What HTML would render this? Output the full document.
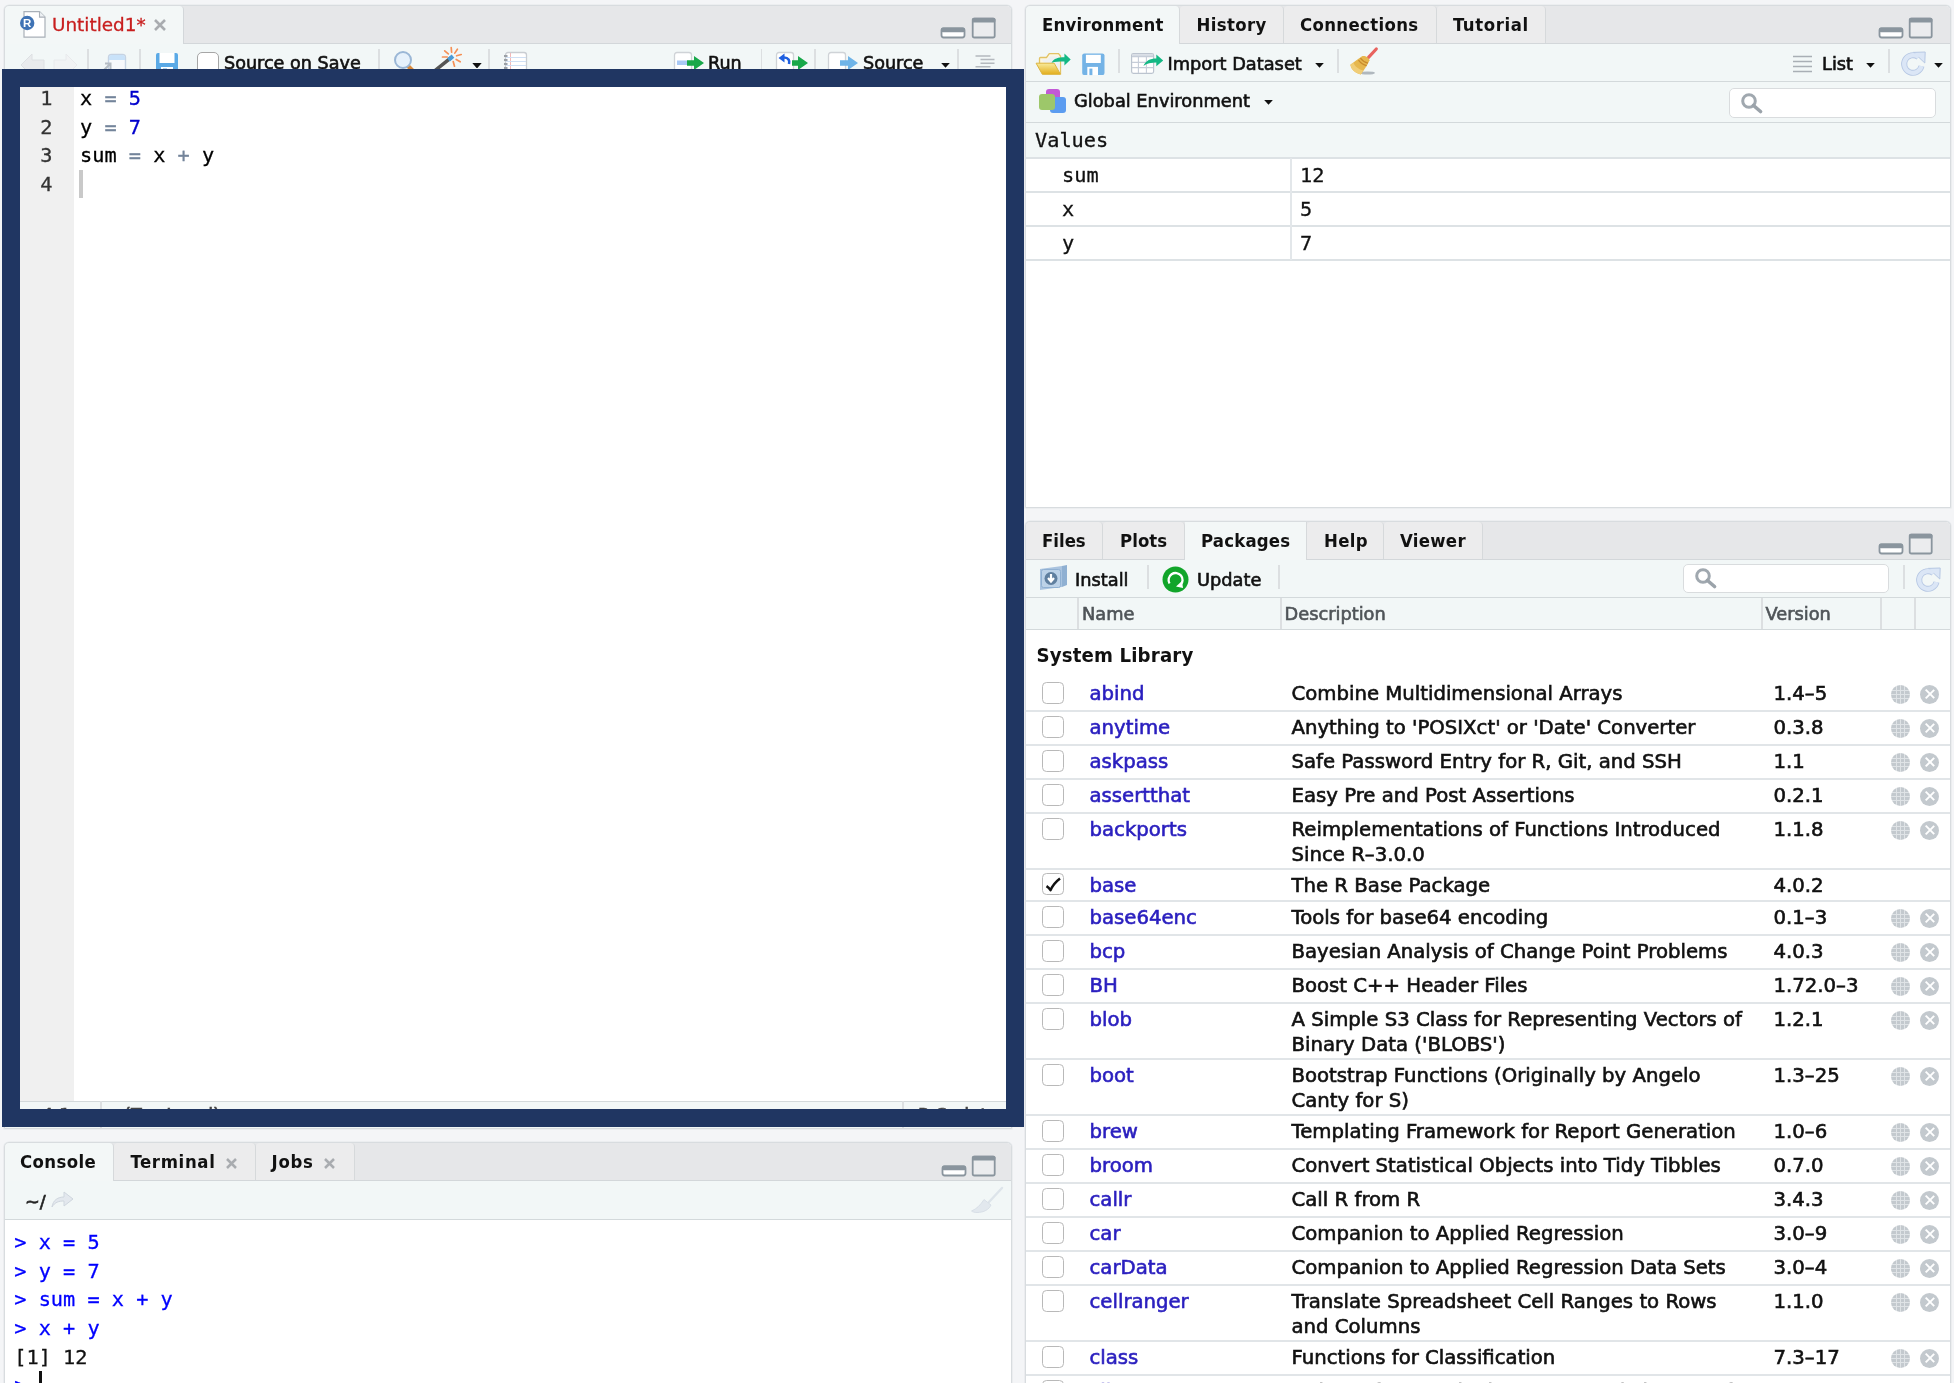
<!DOCTYPE html>
<html><head><meta charset="utf-8"><title>RStudio</title>
<style>
*{box-sizing:border-box;margin:0;padding:0}
html,body{width:1954px;height:1388px;overflow:hidden;background:#fff}
body{-webkit-text-stroke:0.62px;position:relative;font-family:"DejaVu Sans","Liberation Sans",sans-serif;font-size:18px;color:#1a1a1a}
#app{position:absolute;left:0;top:0;width:1954px;height:1383px;background:#f4f5f7;overflow:hidden;will-change:transform}
.abs{position:absolute}
.pane{position:absolute;background:#fff;border:1px solid #d8dcdf;box-shadow:0 0 0 0.6px #e4e7ea;border-radius:5px 5px 0 0;overflow:hidden}
.tabbar{position:absolute;left:0;top:0;right:0;height:38px;background:#e6e7e9;border-bottom:1px solid #d3d7da}
.tab{position:absolute;top:0;height:37px;font-weight:bold;font-size:18.4px;line-height:38px;color:#111;border-right:1px solid #d6d9db;background:#ececed;white-space:nowrap;border-radius:4px 4px 0 0}
.tab.sel{background:#f3f7f7;height:39px;border-radius:4px 4px 0 0}
.tb{position:absolute;left:0;right:0;background:#f2f7f7;border-bottom:1px solid #d3d9db}
.t{position:absolute;white-space:pre;line-height:1}
.mono{font-family:"DejaVu Sans Mono","Liberation Mono",monospace;-webkit-text-stroke:0.3px}
.ln{height:28.6px}.g{display:inline-block;width:32.5px;margin-right:27.5px;text-align:right;color:#333}.o{color:#74849a}.n{color:#0000cd}
.bt{-webkit-text-stroke:0;font-family:"DejaVu Sans Condensed","DejaVu Sans","Liberation Sans",sans-serif;font-weight:bold;font-size:18.4px;letter-spacing:0.350px;color:#111}
.erow{left:0;right:0;height:34px;border-bottom:2px solid #dde2e5;font-size:20.25px;line-height:32px;color:#111;white-space:pre}.erow .k{position:absolute;left:36px;top:0}.erow .v{position:absolute;left:274px;top:0}
.hd{font-size:17.8px;color:#4f5458}
.prow{position:absolute;left:0;right:0;border-bottom:2px solid #e1e5e8;font-size:19.7px;line-height:25.5px;color:#111}
.prow span{position:absolute;white-space:pre}
.cb{left:16px;top:4px;width:22px;height:21.5px;border:1.7px solid #b9b9b9;border-radius:4.5px;background:#fff}
.pn{left:63.5px;top:2.5px;color:#2a1fbf}.pd{left:265.5px;top:2.5px}.pv{left:747.5px;top:2.5px}
.gl{left:865px;top:6.7px;width:19px;height:19px;border-radius:50%;background:#c3c9ce;background-image:linear-gradient(#dfe3e6,#dfe3e6),linear-gradient(#dfe3e6,#dfe3e6),linear-gradient(#dfe3e6,#dfe3e6),linear-gradient(#dfe3e6,#dfe3e6),linear-gradient(#dfe3e6,#dfe3e6),linear-gradient(#dfe3e6,#dfe3e6);background-repeat:no-repeat;background-size:1px 100%,1px 100%,1px 100%,100% 1px,100% 1px,100% 1px;background-position:5px 0,9px 0,13px 0,0 5px,0 9px,0 13px}
.xx{left:894px;top:6.7px;width:19px;height:19px;border-radius:50%;background:#c3c9ce}
.xx:before,.xx:after{content:"";position:absolute;left:8.7px;top:3.5px;width:1.6px;height:12px;background:#fff;transform:rotate(45deg)}
.xx:after{transform:rotate(-45deg)}
.sep{position:absolute;width:1.5px;background:#dcdfe1}
</style></head><body>
<div id="app">
<!-- SOURCE PANE -->
<div class="pane" id="src" style="left:4px;top:5px;width:1008px;height:1124px">
<div class="tabbar"></div>
<div class="tab sel" style="left:0;width:179px;border-right:1px solid #d3d7da"></div>
<!-- R doc icon -->
<svg class="abs" style="left:14px;top:5px" width="30" height="30" viewBox="0 0 30 30">
  <path d="M5 0.600h15.500l5.5 5.500v20h-21z" fill="#fff" stroke="#a9b0b8" stroke-width="1.2"/>
  <path d="M20.5 0.600v5.500h5.5" fill="#eef1f4" stroke="#a9b0b8" stroke-width="1.1"/>
  <circle cx="8.2" cy="12" r="7.2" fill="#3f73b5"/>
  <text x="8.2" y="16.3" text-anchor="middle" font-family="Liberation Sans,sans-serif" font-weight="bold" font-size="11.5" fill="#fff">R</text>
</svg>
<div class="t" style="left:47px;top:10px;font-size:18.4px;color:#c81e1e;-webkit-text-stroke:0.3px">Untitled1*</div>
<svg class="abs" style="left:148px;top:12.3px" width="14" height="14" viewBox="0 0 14 14"><path d="M2 2l10 10M12 2L2 12" stroke="#a9acb0" stroke-width="2.6"/></svg>
<!-- min/max -->
<svg class="abs" style="left:935px;top:10px" width="60" height="26" viewBox="0 0 60 26">
  <rect x="1.5" y="12.3" width="23" height="9.2" rx="2.2" fill="#fff" stroke="#8a959e" stroke-width="1.8"/><rect x="1" y="11.600" width="24" height="4.600" rx="1.800" fill="#8a959e"/>
  <rect x="32.7" y="2.600" width="22" height="18.900" rx="1.800" fill="#ebecee" stroke="#8a959e" stroke-width="1.800"/><rect x="32" y="1.800" width="23.400" height="4.800" rx="1.500" fill="#8a959e"/>
</svg>
<div class="tb" style="top:38px;height:40px"></div>
<!-- back/forward arrows -->
<svg class="abs" style="left:14px;top:44.5px" width="60" height="26" viewBox="0 0 60 26">
  <path d="M2 14L13 3v6h12v10H13v6z" fill="#e9ebed" stroke="#dde0e3" stroke-width="1"/>
  <path d="M58 14L47 3v6H35v10h12v6z" fill="#f1f3f4" stroke="#e8eaec" stroke-width="1"/>
</svg>
<div class="sep" style="left:82px;top:43px;height:27px"></div>
<!-- popout -->
<svg class="abs" style="left:94px;top:44.5px" width="30" height="26" viewBox="0 0 30 26">
  <rect x="9.5" y="3.5" width="17" height="22" rx="3" fill="#f6f8fb" stroke="#c6d3e3" stroke-width="1.4"/>
  <path d="M10 7a3 3 0 0 1 3-3h10a3 3 0 0 1 3 3v2H10z" fill="#c9e2f9"/>
  <path d="M2 22l9-9M6 12.500h5.500V18" fill="none" stroke="#b5bcc4" stroke-width="2"/>
</svg>
<div class="sep" style="left:134px;top:43px;height:27px"></div>
<!-- save -->
<svg class="abs" style="left:150px;top:46px" width="24" height="24" viewBox="0 0 24 24">
  <path d="M1 3a2 2 0 0 1 2-2h18a2 2 0 0 1 2 2v18a2 2 0 0 1-2 2H3a2 2 0 0 1-2-2z" fill="#5aa9e6"/>
  <rect x="4.5" y="1" width="15" height="10" fill="#fff"/>
  <rect x="6" y="15" width="12" height="8" fill="#fff"/><rect x="8" y="16.5" width="4" height="6.5" fill="#5aa9e6"/>
</svg>
<div class="abs" style="left:192.3px;top:46px;width:22px;height:22px;border:1.5px solid #a6a6a6;border-radius:5px;background:#fff"></div>
<div class="t" style="left:219px;top:49.2px;font-size:17.6px;color:#111">Source on Save</div>
<div class="sep" style="left:373px;top:43px;height:27px"></div>
<!-- magnifier -->
<svg class="abs" style="left:385.5px;top:42px" width="32" height="32" viewBox="0 0 32 32">
  <path d="M17 18l9 9" stroke="#d98a3c" stroke-width="4" stroke-linecap="round"/>
  <circle cx="12" cy="12" r="8" fill="#e6f1fb" stroke="#9bb7d6" stroke-width="2"/>
</svg>
<!-- wand -->
<svg class="abs" style="left:427.4px;top:39.2px" width="36" height="34" viewBox="0 0 36 34">
  <path d="M1 27.200L18.5 13.2" stroke="#555" stroke-width="3.6" stroke-linecap="round"/>
  <path d="M16.5 14.800l4.5-3.6" stroke="#4b9bd6" stroke-width="4.2"/>
  <g stroke="#f59056" stroke-width="1.7" stroke-linecap="round"><path d="M19.6 7.2L19.2 2.5"/><path d="M22.8 8.1L25.4 4.2"/><path d="M24.6 10.8L29.2 9.5"/><path d="M24.2 14.4L28.2 16.8"/><path d="M21.2 16.6L22.5 21.2"/><path d="M16.3 8.9L12.7 5.9"/><path d="M15.2 12.0L10.5 12.0"/></g>
</svg>
<svg class="abs" style="left:466.5px;top:56.5px" width="10" height="5.5" viewBox="0 0 10 5.5"><path d="M0.3 0h9.400L5 5.500z" fill="#111"/></svg>
<div class="sep" style="left:483px;top:43px;height:27px"></div>
<!-- notebook -->
<svg class="abs" style="left:498px;top:44.5px" width="26" height="28" viewBox="0 0 26 28">
  <rect x="2.5" y="1.5" width="21" height="26" rx="2.5" fill="#fff" stroke="#c9cdd2" stroke-width="1.3"/>
  <path d="M7.5 2v25" stroke="#f2b8b8" stroke-width="1"/>
  <g stroke="#cfe0f5" stroke-width="1"><path d="M3 6.500h20M3 10.500h20M3 14.500h20M3 18.500h20M3 22.500h20"/></g>
  <g fill="#9aa0a6"><rect x="1" y="4" width="3.5" height="2"/><rect x="1" y="8" width="3.5" height="2"/><rect x="1" y="12" width="3.5" height="2"/><rect x="1" y="16" width="3.5" height="2"/><rect x="1" y="20" width="3.5" height="2"/></g>
</svg>
<!-- run -->
<svg class="abs" style="left:667.5px;top:45px" width="34" height="28" viewBox="0 0 34 28">
  <rect x="1.5" y="1.5" width="17" height="26" rx="2.5" fill="#fff" stroke="#cfd3d7" stroke-width="1.3"/>
  <rect x="4" y="9.5" width="10" height="4.5" fill="#a9c9f5"/>
  <path d="M14 9.300h7V5l10 7-10 7v-4.300h-7z" fill="#18a84a"/>
</svg>
<div class="t" style="left:703px;top:49.2px;font-size:17.6px;color:#111">Run</div>
<div class="sep" style="left:755.7px;top:43px;height:27px"></div>
<!-- rerun -->
<svg class="abs" style="left:770px;top:45px" width="36" height="28" viewBox="0 0 36 28">
  <rect x="1.5" y="1.5" width="17" height="26" rx="2.5" fill="#fff" stroke="#cfd3d7" stroke-width="1.3"/>
  <path d="M9 6.500c4.5 0 6 3 5 6.5" fill="none" stroke="#1f5fe0" stroke-width="2.6"/><path d="M3.5 7l6-4.500v9z" fill="#1f5fe0"/>
  <path d="M17 9.300h6V5l10 7-10 7v-4.300h-6z" fill="#18a84a"/>
</svg>
<div class="sep" style="left:809px;top:43px;height:27px"></div>
<!-- source -->
<svg class="abs" style="left:822px;top:45px" width="34" height="28" viewBox="0 0 34 28">
  <rect x="1.5" y="1.5" width="17" height="26" rx="2.5" fill="#fff" stroke="#cfd3d7" stroke-width="1.3"/>
  <path d="M13 9.300h8V5l10 7-10 7v-4.300h-8z" fill="#6fb4e8"/>
</svg>
<div class="t" style="left:858px;top:49.2px;font-size:17.6px;color:#111">Source</div>
<svg class="abs" style="left:936px;top:57px" width="9" height="5" viewBox="0 0 9 5"><path d="M0.2 0h8.600L4.5 4.800z" fill="#111"/></svg>
<div class="sep" style="left:952px;top:43px;height:27px"></div>
<svg class="abs" style="left:969px;top:47px" width="22" height="22" viewBox="0 0 22 22"><g stroke="#b4b9be" stroke-width="1.5"><path d="M1.5 3h15M6.5 6.600h14M6.5 10.200h14M1.5 13.800h15"/></g></svg>
<!-- bottom status bar remnants -->
<div class="abs" style="left:0;right:0;top:1096px;height:30px;background:#f2f7f7;border-top:1px solid #d3d9db"></div>
<div class="sep" style="left:95px;top:1096px;height:30px"></div>
<div class="sep" style="left:897px;top:1096px;height:30px"></div>
</div>
<!-- CONSOLE PANE -->
<div class="pane" id="con" style="left:4px;top:1142px;width:1008px;height:250px">
<div class="tabbar"></div>
<div class="tab sel" style="left:0;width:109px"></div>
<div class="tab" style="left:109px;width:142px"></div>
<div class="tab" style="left:251px;width:99px"></div>
<div class="t bt" style="left:15px;top:10px;letter-spacing:0.4px">Console</div>
<div class="t bt" style="left:125.5px;top:10px;letter-spacing:0.65px">Terminal</div>
<svg class="abs" style="left:220px;top:14px" width="13" height="13" viewBox="0 0 13 13"><path d="M2 2l9 9M11 2L2 11" stroke="#a9acb0" stroke-width="2.5"/></svg>
<div class="t bt" style="left:266.5px;top:10px;letter-spacing:0.75px">Jobs</div>
<svg class="abs" style="left:318px;top:14px" width="13" height="13" viewBox="0 0 13 13"><path d="M2 2l9 9M11 2L2 11" stroke="#a9acb0" stroke-width="2.5"/></svg>
<svg class="abs" style="left:936px;top:10.7px" width="60" height="26" viewBox="0 0 60 26">
  <rect x="1.5" y="12.3" width="23" height="9.2" rx="2.2" fill="#fff" stroke="#8a959e" stroke-width="1.8"/><rect x="1" y="11.600" width="24" height="4.600" rx="1.800" fill="#8a959e"/>
  <rect x="31.7" y="2.600" width="22" height="18.900" rx="1.800" fill="#ebecee" stroke="#8a959e" stroke-width="1.800"/><rect x="31" y="1.800" width="23.400" height="4.800" rx="1.500" fill="#8a959e"/>
</svg>
<div class="tb" style="top:38px;height:38.7px"></div>
<div class="t" style="left:20px;top:50.5px;font-size:17.7px;color:#222">~/</div>
<svg class="abs" style="left:46px;top:47px" width="24" height="20" viewBox="0 0 24 20"><path d="M1 17c1-7 6-10 12-10V2l9 7-9 7v-5c-5 0-9 1-12 6z" fill="#e3e8ee" stroke="#cfd6de" stroke-width="1"/></svg>
<svg class="abs" style="left:964px;top:42.5px" width="36" height="30" viewBox="0 0 36 30"><path d="M33 2L20 16" stroke="#dde4ea" stroke-width="2.400" stroke-linecap="round"/><path d="M15 13.500l7 5.500c-2 4.500-7 7.500-14 7.500-2.500 0-4.500-0.600-5.500-1.500 5-2 9-6 12.500-11.500z" fill="#e2e8ee" stroke="#d3dbe3" stroke-width="0.800"/></svg>
<div class="mono abs" style="left:9.3px;top:84.9px;font-size:20.25px;line-height:28.7px;white-space:pre;color:#0000ff"><div>&gt; x = 5</div><div>&gt; y = 7</div><div>&gt; sum = x + y</div><div>&gt; x + y</div><div style="color:#111">[1] 12</div><div>&gt; </div></div>
<div class="abs" style="left:33.5px;top:228px;width:3.5px;height:20px;background:#111"></div>
</div>
<!-- ENV PANE -->
<div class="pane" id="env" style="left:1025px;top:5px;width:926px;height:503px">
<div class="tabbar"></div>
<div class="tab sel" style="left:0;width:154px"></div>
<div class="tab" style="left:154px;width:104px"></div>
<div class="tab" style="left:258px;width:153px"></div>
<div class="tab" style="left:411px;width:109px"></div>
<div class="t bt" style="left:16px;top:10px;letter-spacing:0.25px">Environment</div>
<div class="t bt" style="left:170.5px;top:10px;letter-spacing:0.35px">History</div>
<div class="t bt" style="left:274px;top:10px;letter-spacing:0.35px">Connections</div>
<div class="t bt" style="left:427px;top:10px;letter-spacing:0.6px">Tutorial</div>
<svg class="abs" style="left:852px;top:10px" width="60" height="26" viewBox="0 0 60 26">
  <rect x="1.5" y="12.3" width="23" height="9.2" rx="2.2" fill="#fff" stroke="#8a959e" stroke-width="1.8"/><rect x="1" y="11.600" width="24" height="4.600" rx="1.800" fill="#8a959e"/>
  <rect x="31.7" y="2.600" width="22" height="18.900" rx="1.800" fill="#ebecee" stroke="#8a959e" stroke-width="1.800"/><rect x="31" y="1.800" width="23.400" height="4.800" rx="1.500" fill="#8a959e"/>
</svg>
<div class="tb" style="top:38px;height:37.5px"></div>
<!-- open folder -->
<svg class="abs" style="left:9px;top:45px" width="38" height="26" viewBox="0 0 38 26">
  <defs><linearGradient id="fg" x1="0" y1="0" x2="0" y2="1"><stop offset="0" stop-color="#f8ea9c"/><stop offset="1" stop-color="#e3ae1c"/></linearGradient></defs>
  <path d="M4.5 12.5V7.5a1 1 0 0 1 1-1h6l2.8-3.8h9.2l2 2.4v17.4H9z" fill="#fbf6e3" stroke="#e2c365" stroke-width="1.3"/>
  <path d="M6.5 8.500h6l2.5-3h7.500l2 2v14h-6z" fill="#eef0f1"/>
  <path d="M1.1 12.200h18.100l6.3 11.100H7.300z" fill="url(#fg)" stroke="#dcb43f" stroke-width="1"/>
  <path d="M16.5 11.800C19 7.5 23 6.3 29.4 6.300V2.600L35.7 8.400L29.4 14.500V10.600C24 10.6 20 10.8 16.5 11.800z" fill="#14b884"/>
</svg>
<!-- save -->
<svg class="abs" style="left:55px;top:47px" width="24" height="23" viewBox="0 0 24 23">
  <rect x="1.2" y="0.4" width="22.3" height="21.7" rx="2.2" fill="#74b3e6"/>
  <rect x="4.9" y="1.8" width="14.9" height="8.2" fill="#fff"/>
  <rect x="6.3" y="13.9" width="10.7" height="8.2" fill="#fff"/><rect x="8.4" y="15.6" width="3" height="6.5" fill="#74b3e6"/>
</svg>
<div class="sep" style="left:92px;top:42.5px;height:24px"></div>
<!-- table import -->
<svg class="abs" style="left:104px;top:46px" width="36" height="24" viewBox="0 0 36 24">
  <rect x="1.6" y="1.7" width="22" height="19.6" rx="1.8" fill="#fff" stroke="#bcc4cf" stroke-width="1.2"/>
  <path d="M2.200 2.300h20.800v2.200H2.200z" fill="#d5dbe3"/>
  <path d="M2 4.600h21.200M2 10.400h21.200M2 15.600h21.200M8.400 4.600v16.500M16.400 4.600v16.500" stroke="#c6cdd8" stroke-width="1.100"/>
  <path d="M13.400 13.900C15.500 9 20 6.500 26.300 6.500V2.600L33.200 8.400L26.300 14.300V10.600C21 10.600 17 11.500 13.400 13.900z" fill="#14b884"/>
</svg>
<div class="t" style="left:141.5px;top:48.5px;font-size:17.8px;color:#111">Import Dataset</div>
<svg class="abs" style="left:289px;top:57px" width="9" height="5" viewBox="0 0 9 5"><path d="M0.2 0h8.600L4.5 4.800z" fill="#111"/></svg>
<div class="sep" style="left:311px;top:42.5px;height:24px"></div>
<!-- broom -->
<svg class="abs" style="left:319px;top:39px" width="36" height="32" viewBox="0 0 36 32">
  <ellipse cx="22.5" cy="28" rx="7.5" ry="1.6" fill="#9aa3ab" opacity="0.75"/>
  <path d="M31.3 4L23.5 12.3" stroke="#e8635f" stroke-width="3.2" stroke-linecap="round"/>
  <path d="M17 11.200C13 14 9 17 5.4 19.800C6 24 10 28.5 15.8 29.400C19 25 22.5 20 24.5 15.200C24 13 20.5 10.5 17 11.200z" fill="#e6b74e"/>
  <path d="M5.4 19.800C6 24 10 28.5 15.8 29.400L18.5 25.500C13 24.5 9.5 21 8.3 17.600z" fill="#f0cd77"/>
  <path d="M15.4 13.200C17 15.5 20 17.5 23 18.200M13.5 15.200C15.5 17.8 18.5 20 21.7 20.7" fill="none" stroke="#c98a2b" stroke-width="1.3"/>
</svg>
<svg class="abs" style="left:766px;top:49px" width="22" height="20" viewBox="0 0 22 20"><g stroke="#a9afb5" stroke-width="1.4"><path d="M1 1.500h19M1 6.500h19M1 11.500h19M1 16.500h19"/></g></svg>
<div class="t" style="left:796px;top:48.5px;font-size:17.8px;color:#111">List</div>
<svg class="abs" style="left:840px;top:57px" width="9" height="5" viewBox="0 0 9 5"><path d="M0.2 0h8.600L4.5 4.800z" fill="#111"/></svg>
<div class="sep" style="left:862px;top:42.5px;height:24px"></div>
<svg class="abs" style="left:873px;top:44px" width="28" height="28" viewBox="0 0 28 28"><path d="M19.4 7.1A8.8 8.8 0 1 0 22.5 16.1" fill="none" stroke="#b7c8e4" stroke-width="6"/><path d="M14.600 2.400L26.200 2L25.800 13z" fill="#dbe6f6" stroke="#b7c8e4" stroke-width="1" stroke-linejoin="round"/><path d="M19.4 7.1A8.8 8.8 0 1 0 22.5 16.1" fill="none" stroke="#dbe6f6" stroke-width="4.200"/></svg>
<svg class="abs" style="left:908px;top:57px" width="9" height="5" viewBox="0 0 9 5"><path d="M0.2 0h8.600L4.5 4.800z" fill="#111"/></svg>
<div class="tb" style="top:75.5px;height:41.5px"></div>
<!-- global env icon -->
<svg class="abs" style="left:12px;top:82px" width="30" height="26" viewBox="0 0 30 26">
  <rect x="8" y="1" width="14" height="14" rx="3" fill="#c259d6"/>
  <rect x="12" y="9" width="16" height="16" rx="3" fill="#5b9cf0"/>
  <rect x="1" y="6" width="16" height="16" rx="3" fill="#9dc76a"/>
</svg>
<div class="t" style="left:48px;top:86px;font-size:17.8px;color:#111">Global Environment</div>
<svg class="abs" style="left:238px;top:93.5px" width="9" height="5" viewBox="0 0 9 5"><path d="M0.2 0h8.600L4.5 4.800z" fill="#111"/></svg>
<div class="abs" style="left:703px;top:82px;width:207px;height:30px;background:#fff;border:1.5px solid #d9dcde;border-radius:5px"></div>
<svg class="abs" style="left:714px;top:86px" width="24" height="22" viewBox="0 0 24 22"><circle cx="9" cy="9" r="6.3" fill="none" stroke="#a0a8af" stroke-width="3"/><path d="M13.5 13.500l7 6" stroke="#9ba3aa" stroke-width="3.6" stroke-linecap="round"/></svg>
<div class="abs" style="left:0;right:0;top:117px;height:35.5px;background:#f2f7f7;border-bottom:2px solid #dde2e5"></div>
<div class="t mono" style="left:9px;top:123.5px;font-size:20.25px;color:#111">Values</div>
<div class="abs erow" style="top:152.5px"><span class="mono k">sum</span><span class="mono v">12</span></div>
<div class="abs erow" style="top:186.5px"><span class="mono k">x</span><span class="mono v">5</span></div>
<div class="abs erow" style="top:220.5px"><span class="mono k">y</span><span class="mono v">7</span></div>
<div class="abs" style="left:264px;top:152px;width:2px;height:102px;background:#e3e7ea"></div>
</div>
<!-- PKG PANE -->
<div class="pane" id="pkg" style="left:1025px;top:521px;width:926px;height:870px">
<div class="tabbar"></div>
<div class="tab" style="left:0;width:77px"></div>
<div class="tab" style="left:77px;width:82px"></div>
<div class="tab sel" style="left:159px;width:122px;border-radius:0"></div>
<div class="tab" style="left:281px;width:77px"></div>
<div class="tab" style="left:358px;width:99px"></div>
<div class="t bt" style="left:16px;top:10px;letter-spacing:0.0px">Files</div>
<div class="t bt" style="left:94px;top:10px;letter-spacing:0.05px">Plots</div>
<div class="t bt" style="left:175px;top:10px;letter-spacing:0.2px">Packages</div>
<div class="t bt" style="left:298px;top:10px;letter-spacing:0.35px">Help</div>
<div class="t bt" style="left:374px;top:10px;letter-spacing:0.3px">Viewer</div>
<svg class="abs" style="left:852px;top:10px" width="60" height="26" viewBox="0 0 60 26">
  <rect x="1.5" y="12.3" width="23" height="9.2" rx="2.2" fill="#fff" stroke="#8a959e" stroke-width="1.8"/><rect x="1" y="11.600" width="24" height="4.600" rx="1.800" fill="#8a959e"/>
  <rect x="31.7" y="2.600" width="22" height="18.900" rx="1.800" fill="#ebecee" stroke="#8a959e" stroke-width="1.800"/><rect x="31" y="1.800" width="23.400" height="4.800" rx="1.500" fill="#8a959e"/>
</svg>
<div class="tb" style="top:38px;height:37.6px"></div>
<!-- install icon -->
<svg class="abs" style="left:13px;top:42px" width="30" height="28" viewBox="0 0 30 28">
  <path d="M1 5l22-3v21l-22 3z" fill="#a9c3df"/><path d="M23 2l5-1v20l-5 2z" fill="#8fb0d2"/>
  <rect x="2.5" y="5.5" width="19" height="18" rx="2" fill="#bcd2e8" stroke="#8fb0d2" stroke-width="1"/>
  <circle cx="12" cy="14.5" r="6.5" fill="#5f7f9f"/>
  <path d="M12 10v6M9 14l3 3.5 3-3.5" fill="none" stroke="#fff" stroke-width="2.2"/>
</svg>
<div class="t" style="left:49px;top:48.6px;font-size:17.8px;color:#111">Install</div>
<div class="sep" style="left:121px;top:42.7px;height:24px"></div>
<svg class="abs" style="left:136px;top:44px" width="28" height="28" viewBox="0 0 28 28">
  <circle cx="13.5" cy="13.5" r="13" fill="#11a52a"/>
  <path d="M7.5 17.500a7 7 0 1 1 11 1.5" fill="none" stroke="#fff" stroke-width="2.3"/>
  <path d="M14 20.500l7 1.5-1-7z" fill="#fff"/>
</svg>
<div class="t" style="left:171px;top:48.6px;font-size:17.8px;color:#111">Update</div>
<div class="sep" style="left:252px;top:42.7px;height:24px"></div>
<div class="abs" style="left:657px;top:42px;width:206px;height:29px;background:#fff;border:1.5px solid #d9dcde;border-radius:5px"></div>
<svg class="abs" style="left:667.5px;top:44.5px" width="24" height="22" viewBox="0 0 24 22"><circle cx="9" cy="9" r="6.3" fill="none" stroke="#a0a8af" stroke-width="3"/><path d="M13.5 13.5l7 6" stroke="#9ba3aa" stroke-width="3.6" stroke-linecap="round"/></svg>
<div class="sep" style="left:877px;top:42.7px;height:24px"></div>
<svg class="abs" style="left:888px;top:44px" width="28" height="28" viewBox="0 0 28 28"><path d="M19.4 7.1A8.8 8.8 0 1 0 22.5 16.1" fill="none" stroke="#b7c8e4" stroke-width="6"/><path d="M14.600 2.400L26.200 2L25.800 13z" fill="#dbe6f6" stroke="#b7c8e4" stroke-width="1" stroke-linejoin="round"/><path d="M19.4 7.1A8.8 8.8 0 1 0 22.5 16.1" fill="none" stroke="#dbe6f6" stroke-width="4.200"/></svg>
<div class="abs" style="left:0;right:0;top:76px;height:32px;background:#f2f7f7;border-bottom:1px solid #d3d9db"></div>
<div class="sep" style="left:51px;top:76px;height:31px"></div>
<div class="sep" style="left:254px;top:76px;height:31px"></div>
<div class="sep" style="left:735px;top:76px;height:31px"></div>
<div class="sep" style="left:854px;top:76px;height:31px"></div>
<div class="sep" style="left:888px;top:76px;height:31px"></div>
<div class="t hd" style="left:56px;top:83px">Name</div>
<div class="t hd" style="left:258.5px;top:83px">Description</div>
<div class="t hd" style="left:739.5px;top:83px">Version</div>
<div class="t" style="left:10.5px;top:123px;-webkit-text-stroke:0;font-family:'DejaVu Sans Condensed','DejaVu Sans',sans-serif;font-weight:bold;font-size:20.2px;letter-spacing:0.150px;color:#111">System Library</div>
<div class="prow" style="top:156px;height:34px"><span class="cb"></span><span class="pn">abind</span><span class="pd">Combine Multidimensional Arrays</span><span class="pv">1.4–5</span><span class="gl"></span><span class="xx"></span></div>
<div class="prow" style="top:190px;height:34px"><span class="cb"></span><span class="pn">anytime</span><span class="pd">Anything to 'POSIXct' or 'Date' Converter</span><span class="pv">0.3.8</span><span class="gl"></span><span class="xx"></span></div>
<div class="prow" style="top:224px;height:34px"><span class="cb"></span><span class="pn">askpass</span><span class="pd">Safe Password Entry for R, Git, and SSH</span><span class="pv">1.1</span><span class="gl"></span><span class="xx"></span></div>
<div class="prow" style="top:258px;height:34px"><span class="cb"></span><span class="pn">assertthat</span><span class="pd">Easy Pre and Post Assertions</span><span class="pv">0.2.1</span><span class="gl"></span><span class="xx"></span></div>
<div class="prow" style="top:292px;height:56px"><span class="cb"></span><span class="pn">backports</span><span class="pd">Reimplementations of Functions Introduced<br>Since R–3.0.0</span><span class="pv">1.1.8</span><span class="gl"></span><span class="xx"></span></div>
<div class="prow" style="top:348px;height:32px"><span class="cb" style="top:3px"><svg width="19" height="19" viewBox="0 0 19 19" style="position:absolute;left:0;top:0"><path transform="translate(0.7,0.9)" d="M2.800 11.300C4.500 12.300 5.800 13.600 6.800 15.200C9 10.500 12.500 6.500 16.300 3.600" fill="none" stroke="#111" stroke-width="2.500" stroke-linejoin="round"/></svg></span><span class="pn">base</span><span class="pd">The R Base Package</span><span class="pv">4.0.2</span></div>
<div class="prow" style="top:380px;height:34px"><span class="cb"></span><span class="pn">base64enc</span><span class="pd">Tools for base64 encoding</span><span class="pv">0.1–3</span><span class="gl"></span><span class="xx"></span></div>
<div class="prow" style="top:414px;height:34px"><span class="cb"></span><span class="pn">bcp</span><span class="pd">Bayesian Analysis of Change Point Problems</span><span class="pv">4.0.3</span><span class="gl"></span><span class="xx"></span></div>
<div class="prow" style="top:448px;height:34px"><span class="cb"></span><span class="pn">BH</span><span class="pd">Boost C++ Header Files</span><span class="pv">1.72.0–3</span><span class="gl"></span><span class="xx"></span></div>
<div class="prow" style="top:482px;height:56px"><span class="cb"></span><span class="pn">blob</span><span class="pd">A Simple S3 Class for Representing Vectors of<br>Binary Data ('BLOBS')</span><span class="pv">1.2.1</span><span class="gl"></span><span class="xx"></span></div>
<div class="prow" style="top:538px;height:56px"><span class="cb"></span><span class="pn">boot</span><span class="pd">Bootstrap Functions (Originally by Angelo<br>Canty for S)</span><span class="pv">1.3–25</span><span class="gl"></span><span class="xx"></span></div>
<div class="prow" style="top:594px;height:34px"><span class="cb"></span><span class="pn">brew</span><span class="pd">Templating Framework for Report Generation</span><span class="pv">1.0–6</span><span class="gl"></span><span class="xx"></span></div>
<div class="prow" style="top:628px;height:34px"><span class="cb"></span><span class="pn">broom</span><span class="pd">Convert Statistical Objects into Tidy Tibbles</span><span class="pv">0.7.0</span><span class="gl"></span><span class="xx"></span></div>
<div class="prow" style="top:662px;height:34px"><span class="cb"></span><span class="pn">callr</span><span class="pd">Call R from R</span><span class="pv">3.4.3</span><span class="gl"></span><span class="xx"></span></div>
<div class="prow" style="top:696px;height:34px"><span class="cb"></span><span class="pn">car</span><span class="pd">Companion to Applied Regression</span><span class="pv">3.0–9</span><span class="gl"></span><span class="xx"></span></div>
<div class="prow" style="top:730px;height:34px"><span class="cb"></span><span class="pn">carData</span><span class="pd">Companion to Applied Regression Data Sets</span><span class="pv">3.0–4</span><span class="gl"></span><span class="xx"></span></div>
<div class="prow" style="top:764px;height:56px"><span class="cb"></span><span class="pn">cellranger</span><span class="pd">Translate Spreadsheet Cell Ranges to Rows<br>and Columns</span><span class="pv">1.1.0</span><span class="gl"></span><span class="xx"></span></div>
<div class="prow" style="top:820px;height:34px"><span class="cb"></span><span class="pn">class</span><span class="pd">Functions for Classification</span><span class="pv">7.3–17</span><span class="gl"></span><span class="xx"></span></div>
<div class="prow" style="top:854px;height:34px"><span class="cb"></span><span class="pn">cli</span><span class="pd">Helpers for Developing Command Line Interfaces</span><span class="pv">2.0.2</span><span class="gl"></span><span class="xx"></span></div>
</div>
<!-- NAVY BOX -->
<div class="abs" id="navy" style="left:2px;top:69px;width:1022px;height:1058px;border:18px solid #203662;background:#fff;overflow:hidden">
<div class="abs" style="left:0;top:0;width:54px;height:1014px;background:#f0f0f0"></div>
<div class="mono" id="ed" style="position:absolute;left:0;top:-2.9px;font-size:20.25px;line-height:28.6px;white-space:pre;color:#000"><div class="ln"><span class="g">1</span>x <span class="o">=</span> <span class="n">5</span></div><div class="ln"><span class="g">2</span>y <span class="o">=</span> <span class="n">7</span></div><div class="ln"><span class="g">3</span>sum <span class="o">=</span> x <span class="o">+</span> y</div><div class="ln"><span class="g">4</span></div></div>
<div class="abs" style="left:59px;top:83px;width:3.5px;height:28px;background:#c9c9c9"></div>
<div class="abs" style="left:0;width:986px;top:1014px;height:10px;background:#f2f7f7;border-top:1px solid #d3d9db"></div>
<div class="sep" style="left:80px;top:1014px;height:10px"></div>
<div class="t" style="left:22px;top:1019.6px;font-size:17.7px;color:#444">4:1</div>
<div class="t" style="left:104px;top:1019.6px;font-size:17.7px;color:#444">(Top Level)</div>
<div class="t" style="left:898px;top:1019.6px;font-size:17.7px;color:#444">R Script</div>
<div class="sep" style="left:882px;top:1014px;height:10px"></div>
</div>
</div>
</body></html>
